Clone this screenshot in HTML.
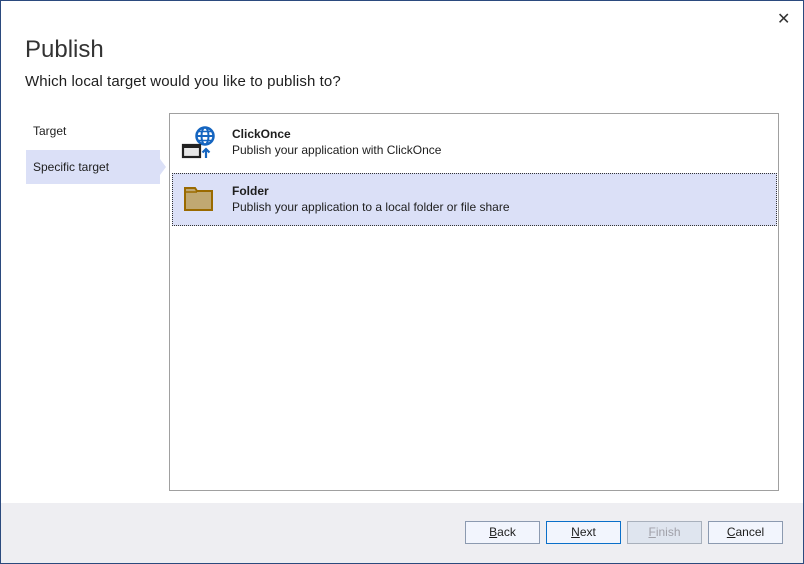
<!DOCTYPE html>
<html><head><style>
body{margin:0;width:804px;height:564px;overflow:hidden;font-family:"Segoe UI","Liberation Sans",sans-serif;}
.win{position:absolute;left:0;top:0;width:802px;height:562px;border:1px solid #2b4a7e;background:#fff;}
.a{position:absolute;}
.btn{position:absolute;top:520px;width:73px;height:21px;border:1px solid #8c9ab0;background:#f2f5fd;font-size:12px;text-align:center;line-height:21px;color:#1e1e1e;}
</style></head><body>
<div class="win">
<div class="a" style="left:776px;top:8px;font-size:16px;color:#333">✕</div>
<div class="a" style="left:24px;top:35px;font-size:24px;color:#333;">Publish</div>
<div class="a" style="left:24px;top:72px;font-size:15px;color:#1e1e1e;letter-spacing:0.1px">Which local target would you like to publish to?</div>
<div class="a" style="left:32px;top:123px;font-size:12px;color:#1e1e1e">Target</div>
<div class="a" style="left:25px;top:149px;width:134px;height:34px;background:#dbe0f7"></div>
<div class="a" style="left:159px;top:158px;width:0;height:0;border-top:8px solid transparent;border-bottom:8px solid transparent;border-left:6px solid #dbe0f7"></div>
<div class="a" style="left:32px;top:159px;font-size:12px;color:#1e1e1e">Specific target</div>
<div class="a" style="left:168px;top:112px;width:608px;height:376px;border:1px solid #a0a0a0;background:#fff"></div>
<svg class="a" style="left:180px;top:124px" width="36" height="36">
<circle cx="24" cy="11" r="8.5" fill="none" stroke="#1565c0" stroke-width="2.5"/>
<ellipse cx="24" cy="11" rx="3.5" ry="8.5" fill="none" stroke="#1565c0" stroke-width="2"/>
<line x1="15" y1="11" x2="33" y2="11" stroke="#1565c0" stroke-width="2"/>
<line x1="17" y1="6.5" x2="31" y2="6.5" stroke="#1565c0" stroke-width="1.5"/>
<line x1="17" y1="15.5" x2="31" y2="15.5" stroke="#1565c0" stroke-width="1.5"/>
<rect x="2" y="20" width="17" height="12" fill="#e8e8e8" stroke="#222" stroke-width="2.2"/>
<rect x="2" y="20" width="17" height="3" fill="#222"/>
<path d="M25 33V24M21.5 27.5L25 24L28.5 27.5" fill="none" stroke="#1565c0" stroke-width="2.2"/>
</svg>
<div class="a" style="left:231px;top:126px;font-size:12px;font-weight:bold;color:#1e1e1e">ClickOnce</div>
<div class="a" style="left:231px;top:142px;font-size:12px;color:#1e1e1e">Publish your application with ClickOnce</div>
<div class="a" style="left:171px;top:172px;width:603px;height:51px;background:#dbe0f7;border:1px dotted #333"></div>
<svg class="a" style="left:182px;top:185px" width="32" height="26">
<path d="M2 2H12L14 5H29V24H2Z" fill="#c0a872" stroke="#9a6a00" stroke-width="2"/>
<line x1="2" y1="6" x2="14" y2="6" stroke="#9a6a00" stroke-width="1.5"/>
</svg>
<div class="a" style="left:231px;top:183px;font-size:12px;font-weight:bold;color:#1e1e1e">Folder</div>
<div class="a" style="left:231px;top:199px;font-size:12px;color:#1e1e1e">Publish your application to a local folder or file share</div>
<div class="a" style="left:0;top:502px;width:802px;height:60px;background:#eeeef2"></div>
<div class="btn" style="left:464px"><u>B</u>ack</div>
<div class="btn" style="left:545px;border-color:#0a6fc9"><u>N</u>ext</div>
<div class="btn" style="left:626px;background:#dfe5ef;border-color:#a8b0bc;color:#a0a0a8"><u>F</u>inish</div>
<div class="btn" style="left:707px"><u>C</u>ancel</div>
</div>
</body></html>
